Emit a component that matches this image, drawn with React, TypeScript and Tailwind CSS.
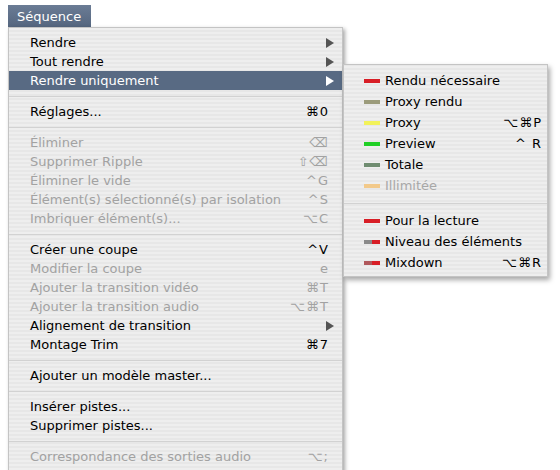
import React from 'react'

type Item =
  | { sep: true }
  | { label: string; key?: string; sub?: boolean; off?: boolean; active?: boolean; sep?: false }

const stripes =
  'bg-[repeating-linear-gradient(0deg,#eeeeee_0px,#eeeeee_2px,#e7e7e7_2px,#e7e7e7_4px)]'

const mainItems: Item[] = [
  { label: 'Rendre', sub: true },
  { label: 'Tout rendre', sub: true },
  { label: 'Rendre uniquement', sub: true, active: true },
  { sep: true },
  { label: 'Réglages...', key: '⌘0' },
  { sep: true },
  { label: 'Éliminer', key: '⌫', off: true },
  { label: 'Supprimer Ripple', key: '⇧⌫', off: true },
  { label: 'Éliminer le vide', key: '^G', off: true },
  { label: 'Élément(s) sélectionné(s) par isolation', key: '^S', off: true },
  { label: 'Imbriquer élément(s)...', key: '⌥C', off: true },
  { sep: true },
  { label: 'Créer une coupe', key: '^V' },
  { label: 'Modifier la coupe', key: 'e', off: true },
  { label: 'Ajouter la transition vidéo', key: '⌘T', off: true },
  { label: 'Ajouter la transition audio', key: '⌥⌘T', off: true },
  { label: 'Alignement de transition', sub: true },
  { label: 'Montage Trim', key: '⌘7' },
  { sep: true },
  { label: 'Ajouter un modèle master...' },
  { sep: true },
  { label: 'Insérer pistes...' },
  { label: 'Supprimer pistes...' },
  { sep: true },
  { label: 'Correspondance des sorties audio', key: '⌥;', off: true },
]

type RenderItem =
  | { sep: true }
  | { label: string; bar: string[]; key?: string; off?: boolean; sep?: false }

const renderItems: RenderItem[] = [
  { label: 'Rendu nécessaire', bar: ['#d81e26'] },
  { label: 'Proxy rendu', bar: ['#9c9c7c'] },
  { label: 'Proxy', bar: ['#f2f25a'], key: '⌥⌘P' },
  { label: 'Preview', bar: ['#1fcf25'], key: '^ R' },
  { label: 'Totale', bar: ['#6f8c70'] },
  { label: 'Illimitée', bar: ['#f2c98a'], off: true },
  { sep: true },
  { label: 'Pour la lecture', bar: ['#d81e26'] },
  { label: 'Niveau des éléments', bar: ['#8a8a8a', '#d81e26'] },
  { label: 'Mixdown', bar: ['#b0585c', '#d81e26'], key: '⌥⌘R' },
]

function Arrow({ light }: { light?: boolean }) {
  return (
    <svg width="8" height="10" viewBox="0 0 8 10" className="shrink-0">
      <polygon points="0,0 8,5 0,10" fill={light ? '#ffffff' : '#555555'} />
    </svg>
  )
}

function Separator({ h }: { h: string }) {
  return (
    <div className={`flex items-center ${h}`}>
      <div className="h-px w-full bg-[#d2d2d2]" />
    </div>
  )
}

export default function App() {
  return (
    <div className="relative h-[470px] w-[560px] overflow-hidden bg-white font-['DejaVu_Sans',sans-serif] text-[13px] leading-none text-black">
      <div className="pl-2 pt-[5px]">
        <div className="flex h-[22px] w-[83px] items-center bg-gradient-to-b from-[#6b7c95] to-[#55667f] pl-[9px] text-white">
          Séquence
        </div>
        <div
          className={`w-[335px] border-x border-t border-[#c4c4c4] pt-[5px] pb-4 shadow-[2px_2px_4px_rgba(0,0,0,0.35)] ${stripes}`}
        >
          {mainItems.map((it, i) =>
            it.sep ? (
              <Separator key={i} h="h-[12px]" />
            ) : (
              <div
                key={i}
                className={`flex h-[19px] items-center justify-between pl-[21px] ${
                  it.sub ? 'pr-[8px]' : 'pr-[13px]'
                } ${it.active ? 'bg-[#586a83] text-white' : it.off ? 'text-[#a2a2a2]' : ''}`}
              >
                <span>{it.label}</span>
                {it.sub && <Arrow light={it.active} />}
                {it.key && <span className="tracking-[1px]">{it.key}</span>}
              </div>
            )
          )}
        </div>
      </div>

      <div
        className={`absolute left-[343px] top-[64px] w-[205px] border border-[#c4c4c4] pt-[5px] pb-[3px] shadow-[2px_3px_5px_rgba(0,0,0,0.35)] ${stripes}`}
      >
        {renderItems.map((it, i) =>
          it.sep ? (
            <Separator key={i} h="h-[14px]" />
          ) : (
            <div
              key={i}
              className={`flex h-[21px] items-center pl-[20px] pr-[5px] ${it.off ? 'text-[#a8a8a8]' : ''}`}
            >
              <span className="flex h-[4px] w-[16px] shrink-0">
                {it.bar.map((c, j) => (
                  <span key={j} className="h-full flex-1" style={{ backgroundColor: c }} />
                ))}
              </span>
              <span className="ml-[5px] flex-1">{it.label}</span>
              {it.key && <span className="tracking-[1px]">{it.key}</span>}
            </div>
          )
        )}
      </div>
    </div>
  )
}
